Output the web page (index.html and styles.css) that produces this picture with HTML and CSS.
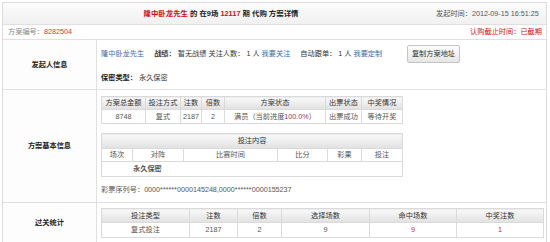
FILE: index.html
```html
<!DOCTYPE html>
<html lang="zh">
<head>
<meta charset="utf-8">
<link rel="stylesheet" href="styles.css">
</head>
<body>
<div class="page">
  <div class="hd">
    <div class="title"><span class="red">隆中卧龙先生</span> 的 在9场 <span class="red">12117</span> 期 代购 方案详情</div>
    <div class="time">发起时间：2012-09-15 16:51:25</div>
  </div>
  <div class="sub">
    <span class="gray">方案编号：<span class="num">8282504</span></span>
    <span class="red">认购截止时间：已截期</span>
  </div>
  <div class="sec s1">
    <div class="lab">发起人信息</div>
    <div class="body">
      <div class="row1">
        <a class="link name">隆中卧龙先生</a>
        <span class="info"><b>战绩：</b> 暂无战绩 关注人数： 1 人 <a class="link">我要关注</a></span>
        <span class="info auto">自动跟单： 1 人 <a class="link">我要定制</a></span>
        <button class="btn">复制方案地址</button>
      </div>
      <div class="row2"><b>保密类型：</b> 永久保密</div>
    </div>
  </div>
  <div class="sec s2">
    <div class="lab">方案基本信息</div>
    <div class="body">
      <table class="tb t1">
        <colgroup><col class="c1"><col class="c2"><col class="c3"><col class="c4"><col class="c5"><col class="c6"><col class="c7"></colgroup>
        <tr class="th"><td>方案总金额</td><td>投注方式</td><td>注数</td><td>倍数</td><td>方案状态</td><td>出票状态</td><td>中奖情况</td></tr>
        <tr class="td"><td>8748</td><td>复式</td><td>2187</td><td>2</td><td>满员（当前进度<span class="pct">100.0%</span>）</td><td>出票成功</td><td>等待开奖</td></tr>
      </table>
      <table class="tb t2">
        <colgroup><col class="d1"><col class="d2"><col class="d3"><col class="d4"><col class="d5"><col class="d6"></colgroup>
        <tr class="th big"><td colspan="6">投注内容</td></tr>
        <tr class="td sm"><td>场次</td><td>对阵</td><td>比赛时间</td><td>比分</td><td>彩果</td><td>投注</td></tr>
        <tr class="td big"><td colspan="6" class="secret">永久保密</td></tr>
      </table>
      <div class="serial">彩票序列号：0000******0000145248,0000******0000155237</div>
    </div>
  </div>
  <div class="sec s3">
    <div class="lab">过关统计</div>
    <div class="body">
      <table class="tb t3">
        <colgroup><col class="e1"><col class="e2"><col class="e3"><col class="e4"><col class="e5"><col class="e6"></colgroup>
        <tr class="th"><td>投注类型</td><td>注数</td><td>倍数</td><td>选择场数</td><td>命中场数</td><td>中奖注数</td></tr>
        <tr class="td"><td>复式投注</td><td>2187</td><td>2</td><td>9</td><td class="red">9</td><td class="red">1</td></tr>
      </table>
    </div>
  </div>
</div>
</body>
</html>
```

FILE: styles.css
```css
* { box-sizing: border-box; }
html, body { margin: 0; padding: 0; background: #fff; }
body {
  font-family: "Liberation Sans", "Noto Sans CJK SC", sans-serif;
  font-size: 7.2px;
  color: #333;
  line-height: 12px;
}
.page {
  margin: 2px 0 0 2px;
  width: 545px;
  border: 1px solid #dcdcdc;
  border-bottom: none;
}
.red { color: #cc1111; }
.gray { color: #888; }
.num { color: #c8383f; }
.link { color: #3b6aa8; text-decoration: none; }
.pct { color: #a0306a; }

.hd {
  display: flex;
  align-items: center;
  height: 22px;
  border-bottom: 1px solid #e0e0e0;
  background: linear-gradient(#fbfbfb, #f1f1f1);
}
.title {
  flex: 1;
  text-align: center;
  font-weight: bold;
  color: #222;
  font-size: 7.4px;
  padding-left: 3px;
}
.time {
  width: 110px;
  color: #555;
}
.sub {
  display: flex;
  justify-content: space-between;
  align-items: center;
  height: 15px;
  padding: 0 4px 0 5px;
  border-bottom: 1px solid #e0e0e0;
}

.sec {
  display: flex;
  border-bottom: 1px solid #e0e0e0;
}
.lab {
  width: 94px;
  flex: none;
  border-right: 1px solid #e0e0e0;
  display: flex;
  align-items: center;
  justify-content: center;
  font-weight: bold;
  color: #222;
  background: #fdfdfd;
}
.body { flex: 1; padding-left: 4px; }

.s1 { height: 50px; }
.s1 .body { padding-top: 5px; }
.row1 { display: flex; align-items: center; height: 18px; }
.row1 .name { margin-right: 10px; }
.row1 .auto { margin-left: 10px; }
.btn {
  margin-left: auto;
  margin-right: 86px;
  width: 53px;
  height: 18px;
  padding: 0;
  font: inherit;
  color: #333;
  border: 1px solid #c4c4c4;
  border-radius: 2px;
  background: linear-gradient(#fdfdfd, #e6e6e6);
}
.row2 { margin-top: 9px; }
.row2 b { color: #222; }

.s2 { height: 113px; }
.s2 .body { padding-top: 6px; }
.tb {
  border-collapse: collapse;
  table-layout: fixed;
  text-align: center;
}
.tb td {
  border: 1px solid #dadada;
  padding: 0;
  white-space: nowrap;
  overflow: hidden;
}
.tb .th td {
  background: linear-gradient(#f9f9f9, #e1e1e1);
  color: #333;
}
.tb .td td { color: #555; background: #fff; }
.t1 { width: 301px; }
.t1 tr { height: 13px; }
.t1 .td { height: 14px; }
.c1 { width: 44px; } .c2 { width: 35px; } .c3 { width: 21px; } .c4 { width: 23px; }
.c5 { width: 101px; } .c6 { width: 36px; } .c7 { width: 41px; }

.t2 { width: 301px; margin-top: 9px; }
.t2 .big { height: 15px; }
.t2 .sm { height: 13px; }
.d1 { width: 31px; } .d2 { width: 51px; } .d3 { width: 94px; } .d4 { width: 50px; }
.d5 { width: 34px; } .d6 { width: 41px; }
.t2 .secret { text-align: left; padding-left: 31px; font-weight: bold; color: #222; }
.serial { margin-top: 7px; color: #555; }

.s3 { height: 40px; border-bottom: none; }
.s3 .body { padding-top: 5px; }
.t3 { width: 442px; }
.t3 .th { height: 14px; }
.t3 .td { height: 15px; }
.t3 .td td.red { color: #cc2244; }
.e1 { width: 88px; } .e2 { width: 48px; } .e3 { width: 44px; } .e4 { width: 88px; }
.e5 { width: 87px; } .e6 { width: 87px; }
```
